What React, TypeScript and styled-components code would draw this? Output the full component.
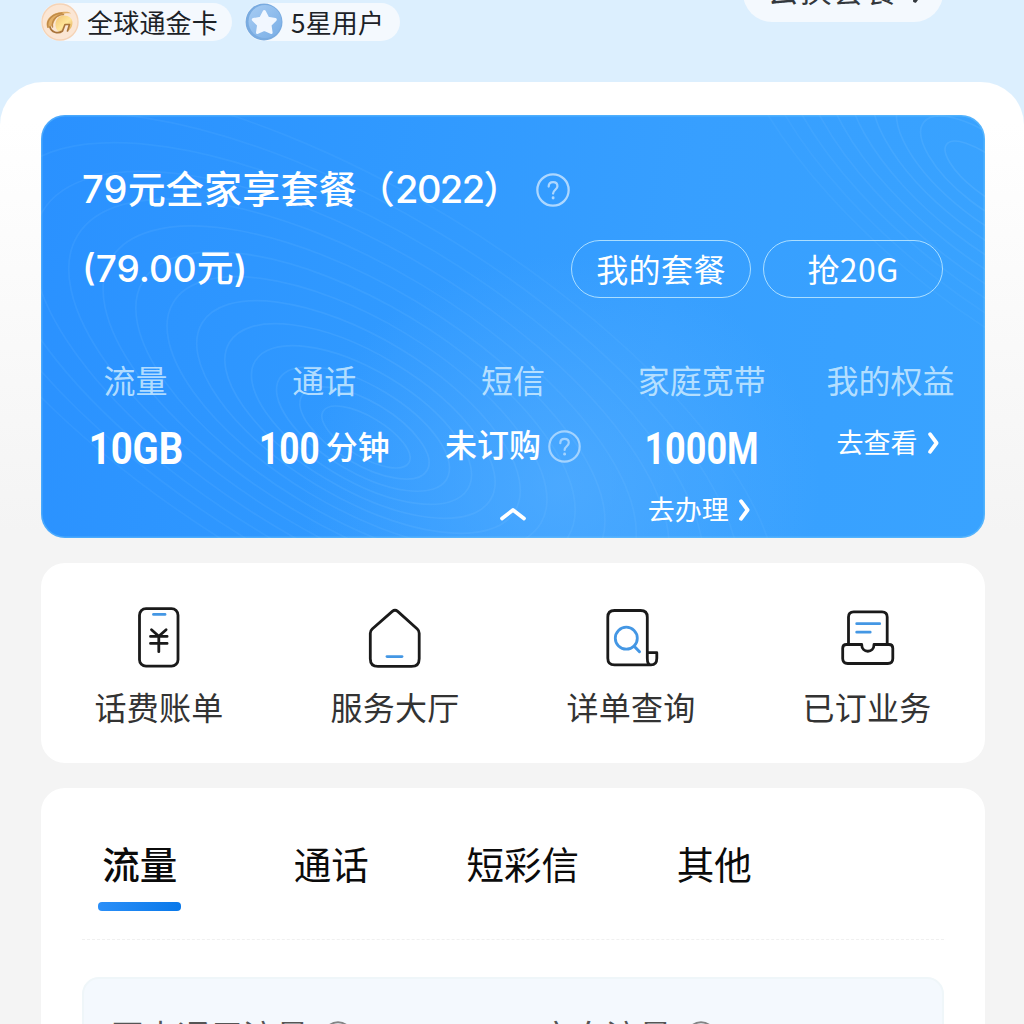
import React from "react";
import styled, { createGlobalStyle } from "styled-components";

const GlobalStyle = createGlobalStyle`
  * { box-sizing: border-box; }
  html, body { margin: 0; padding: 0; }
  body {
    width: 1024px;
    height: 1024px;
    overflow: hidden;
    font-family: "Noto Sans CJK SC", "Noto Sans", sans-serif;
    background: #dceffe;
  }
`;

const Screen = styled.div`
  width: 1024px;
  height: 1024px;
  overflow: hidden;
  background: #dceffe;
`;

const Header = styled.header`
  height: 82px;
  padding: 0 81px 0 41px;
  display: flex;
  justify-content: space-between;
  align-items: flex-start;
`;

const Badges = styled.div`
  display: flex;
  gap: 13px;
  padding-top: 3px;
`;

const Badge = styled.div<{ $width: number }>`
  width: ${(p) => p.$width}px;
  height: 38px;
  border-radius: 19px;
  background: #f4f9fe;
  display: flex;
  align-items: center;
  gap: 8px;
  color: #1c2227;
  font-size: 26px;
  line-height: 34px;
  letter-spacing: 0.2px;
  white-space: nowrap;

  svg { flex: none; }
  span { padding-bottom: 1px; }
`;

const SwitchPlan = styled.button`
  width: 200px;
  height: 58px;
  margin-top: -36px;
  border: 0;
  border-radius: 29px;
  background: #f4f9fe;
  display: flex;
  align-items: center;
  justify-content: center;
  gap: 14px;
  padding: 0 0 10px 6px;
  font: 400 31.5px/48px "Noto Sans CJK SC", sans-serif;
  letter-spacing: 1px;
  color: #33383d;

  svg { margin-top: 8px; }
`;

const Sheet = styled.main`
  height: 942px;
  padding: 33px 39px 0 41px;
  border-radius: 43px 43px 0 0;
  background: linear-gradient(#fff 0, #fff 40px, #f4f4f4 450px);
  display: flex;
  flex-direction: column;
  gap: 25px;
`;

const Hero = styled.section`
  position: relative;
  height: 423px;
  flex: none;
  padding-top: 47px;
  border-radius: 24px;
  overflow: hidden;
  color: #fff;
  background:
    radial-gradient(ellipse 260px 230px at 520px 370px, rgba(96, 180, 255, 0.5), rgba(96, 180, 255, 0)),
    linear-gradient(100deg, #2a91ff 0%, #3099ff 35%, #379fff 65%, #39a3ff 100%);
  box-shadow: inset 0 0 0 1.5px rgba(120, 205, 250, 0.4);
`;

const Contours = styled.svg`
  position: absolute;
  inset: 0;
`;

const HeroBody = styled.div`
  position: relative;
`;

const TitleRow = styled.div`
  display: flex;
  align-items: center;
  gap: 19px;
  height: 56px;
  padding-left: 41px;
`;

const Title = styled.h1`
  margin: 0;
  padding-bottom: 2px;
  width: 435px;
  font-size: 38px;
  line-height: 52px;
  font-weight: 500;
  font-family: Inter, "Noto Sans CJK SC", sans-serif;
  letter-spacing: 0.2px;
  white-space: nowrap;
`;

const Year = styled.span`
  letter-spacing: -1.6px;
`;

const PriceRow = styled.div`
  display: flex;
  align-items: center;
  justify-content: space-between;
  height: 58px;
  margin-top: 22px;
  padding: 0 42px 0 41px;
`;

const Price = styled.div`
  font-size: 37px;
  line-height: 50px;
  font-weight: 500;
  font-family: Inter, "Noto Sans CJK SC", sans-serif;
`;

const PillGroup = styled.div`
  display: flex;
  gap: 12px;
`;

const Pill = styled.button`
  width: 180px;
  height: 58px;
  padding: 0 0 2px;
  border: 1.5px solid rgba(200, 238, 255, 0.8);
  border-radius: 29px;
  background: transparent;
  color: #fff;
  font: 400 32px/50px "Noto Sans CJK SC", sans-serif;
  letter-spacing: 0.4px;
`;

const Stats = styled.div`
  display: grid;
  grid-template-columns: repeat(5, 1fr);
  margin-top: 61px;
`;

const Stat = styled.div`
  display: flex;
  flex-direction: column;
  align-items: center;
`;

const StatLabel = styled.div`
  font-size: 32px;
  line-height: 40px;
  color: rgba(214, 240, 255, 0.8);
  white-space: nowrap;
`;

const StatValue = styled.div<{ $gap?: number }>`
  display: flex;
  align-items: center;
  justify-content: center;
  gap: ${(p) => p.$gap ?? 0}px;
  height: 56px;
  margin-top: 18px;
  white-space: nowrap;

  > svg { flex: none; margin-top: 2px; }
`;

const Figure = styled.span<{ $width: number; $scale: number }>`
  width: ${(p) => p.$width}px;
  display: flex;
  justify-content: center;
  font-family: Roboto, sans-serif;
  font-size: 44.5px;
  line-height: 56px;
  font-weight: 700;
  padding-top: 7px;

  span { transform: scaleX(${(p) => p.$scale}); }
`;

const Unit = styled.span<{ $lift?: number }>`
  font-size: 32px;
  line-height: 48px;
  font-weight: 500;
  padding-bottom: ${(p) => p.$lift ?? 0}px;
`;

const Link = styled.a<{ $lift?: number }>`
  display: flex;
  align-items: center;
  gap: 9px;
  font-size: 27px;
  line-height: 40px;
  padding: 0 5px ${(p) => p.$lift ?? 0}px 0;
  color: #fff;
  white-space: nowrap;

  svg { margin-top: 2px; }
`;

const StatFoot = styled.div<{ $drop?: number }>`
  display: flex;
  align-items: center;
  height: 40px;
  margin-top: 16px;
  padding-top: ${(p) => p.$drop ?? 0}px;
`;

const Actions = styled.nav`
  height: 200px;
  flex: none;
  display: grid;
  grid-template-columns: repeat(4, 1fr);
  border-radius: 24px;
  background: #fff;
`;

const Action = styled.div`
  display: flex;
  flex-direction: column;
  align-items: center;
  padding-top: 38px;
  font-size: 32px;
  line-height: 48px;
  color: #333;
`;

const ActionLabel = styled.span`
  margin-top: 9px;
  letter-spacing: 0.3px;
`;

const Usage = styled.section`
  height: 260px;
  flex: none;
  border-radius: 24px 24px 0 0;
  background: #fff;
`;

const Tabs = styled.div`
  display: grid;
  grid-template-columns: repeat(4, 191.5px);
  padding: 48px 0 0 3px;
  height: 151px;
`;

const Tab = styled.div<{ $active?: boolean }>`
  display: flex;
  flex-direction: column;
  align-items: center;
  font-size: 37.5px;
  line-height: 54px;
  font-weight: ${(p) => (p.$active ? 500 : 400)};
  color: #0b0b0b;

  &::after {
    content: "";
    width: 83px;
    height: 9px;
    margin-top: 12px;
    border-radius: 4px;
    background: ${(p) => (p.$active ? "linear-gradient(90deg, #2b8ff8, #0878ea)" : "transparent")};
  }
`;

const Divider = styled.div`
  margin: 0 41px;
  border-top: 1px dashed #f0f0f0;
`;

const Panel = styled.div`
  margin: 37px 41px 0;
  height: 120px;
  padding: 36px 0 0 27px;
  border: 2px solid #eff6f9;
  border-radius: 17px;
  background: #f4f9fe;
  display: grid;
  grid-template-columns: 429px 1fr;
`;

const PanelItem = styled.div`
  display: flex;
  align-items: flex-start;
  gap: 14px;
  font-size: 33px;
  line-height: 40px;
  color: #555;

  svg { margin-top: 6px; }
`;

function Help({ size = 33, color = "#fff", opacity = 0.6 }: { size?: number; color?: string; opacity?: number }) {
  return (
    <svg width={size} height={size} viewBox="0 0 33 33" fill="none" stroke={color} strokeOpacity={opacity} strokeWidth="2.2" strokeLinecap="round">
      <circle cx="16.5" cy="16.5" r="15.2" />
      <path d="M12.3 13.2c0-2.6 1.8-4.3 4.3-4.3s4.2 1.6 4.2 3.9c0 3.2-4.2 3.7-4.2 7.1" />
      <path d="M16.6 24v.2" strokeWidth="2.8" />
    </svg>
  );
}

function Chevron({ color = "#fff" }: { color?: string }) {
  return (
    <svg width="13" height="24" viewBox="0 0 13 24" fill="none" stroke={color} strokeWidth="3.8" strokeLinecap="round" strokeLinejoin="round">
      <path d="M3 3.2 L9.6 12 L3 20.8" />
    </svg>
  );
}

function ChevronUp() {
  return (
    <svg width="28" height="16" viewBox="0 0 28 16" fill="none" stroke="#fff" strokeWidth="3.8" strokeLinecap="round" strokeLinejoin="round">
      <path d="M3 12.4 L14 4 L25 12.4" />
    </svg>
  );
}

function GoldCoin() {
  return (
    <svg width="38" height="38" viewBox="0 0 38 38" fill="none">
      <defs>
        <linearGradient id="gold" x1="0" y1="0" x2="1" y2="1">
          <stop offset="0" stopColor="#f2c374" />
          <stop offset="0.55" stopColor="#ffe699" />
          <stop offset="1" stopColor="#d9a04c" />
        </linearGradient>
      </defs>
      <circle cx="19" cy="19" r="18" fill="#fbe6d4" stroke="#f5d3b6" strokeWidth="1.4" />
      <path d="M6.500 25C3 17 11 9.500 21 9c5-.5 8 0 9 1.500-7-1-13 1.500-16 6.500-2 4-3.500 8-7.500 8Z" fill="#e2b068" />
      <path d="M15 25C13 18 17 12.500 23 12.500c5 0 8.500 3 8.500 7 0 4.500-2.500 7.500-5 8.500l1.500-6.500h-4.500l-2.500 5.500c-1.500 2.500-4.500 2-6-2Z" fill="url(#gold)" />
      <path d="M9 24c1 5 8 7.500 12.500 4l2.500-6.500h4.500L26.500 28" stroke="#a9743a" strokeWidth="1.7" strokeLinecap="round" strokeLinejoin="round" />
      <path d="M7 24C5 17 12 10.500 21 10M11.500 24c-1-6 3-12 11-12.500" stroke="#c08a48" strokeWidth="1.5" strokeLinecap="round" />
    </svg>
  );
}

function StarCoin() {
  return (
    <svg width="38" height="38" viewBox="0 0 38 38">
      <defs>
        <linearGradient id="blue" x1="0" y1="0" x2="1" y2="1">
          <stop offset="0" stopColor="#a8cdf3" />
          <stop offset="1" stopColor="#78ade6" />
        </linearGradient>
      </defs>
      <circle cx="19" cy="19" r="18.5" fill="#79abe0" />
      <circle cx="20" cy="18.5" r="16.5" fill="url(#blue)" />
      <path d="M19.300 8.500l3.500 6.800 7.500 1.300-5.300 5.400 1.100 7.500-6.800-3.200-6.800 3.200 1.100-7.500-5.300-5.400 7.500-1.300Z" fill="#f1f7ff" stroke="#f1f7ff" strokeWidth="3" strokeLinejoin="round" />
    </svg>
  );
}

const ink = { fill: "none", stroke: "#1a1a1a", strokeWidth: 2.8, strokeLinecap: "round", strokeLinejoin: "round" } as const;
const accent = "#4497e4";

function BillIcon() {
  return (
    <svg width="72" height="72" viewBox="0 0 72 72" {...ink}>
      <rect x="16.5" y="7.700" width="38.5" height="57.5" rx="6.5" />
      <path d="M30.500 13.400h11.500" stroke={accent} />
      <path d="M28.500 28.700l7.300 6.600 7.300-6.600M27.500 35.400h16.600M27.500 42.400h16.600M35.800 35.400v15.300" />
    </svg>
  );
}

function HallIcon() {
  return (
    <svg width="72" height="72" viewBox="0 0 72 72" {...ink}>
      <path d="M33.300 10.400Q36 8.200 38.700 10.400L58.300 28Q60.200 29.700 60.200 32.200V57.700Q60.200 65.400 52.500 65.400H19Q11.300 65.400 11.300 57.700V32.200Q11.300 29.700 13.200 28Z" />
      <path d="M28 55.600h15" stroke={accent} />
    </svg>
  );
}

function DetailIcon() {
  return (
    <svg width="72" height="72" viewBox="0 0 72 72" {...ink}>
      <path d="M52.300 51.700V16.200Q52.300 9.500 45.600 9.500H19.500Q12.800 9.500 12.800 16.200V57.200Q12.800 63.900 19.500 63.900H56Q61.800 63.900 61.800 57.200V51.700H52.300V57.200Q52.300 63.900 56 63.900" />
      <circle cx="31.300" cy="37.200" r="11" stroke={accent} />
      <path d="M39.200 45.200l5.300 5.500" stroke={accent} strokeWidth="3" />
    </svg>
  );
}

function OrdersIcon() {
  return (
    <svg width="72" height="72" viewBox="0 0 72 72" {...ink}>
      <path d="M17.500 43.500V16Q17.500 10.800 22.700 10.800H51Q56.200 10.800 56.200 16V43.500" />
      <path d="M15.500 43.500H30.700C30.700 52.500 43 52.500 43 43.500H58Q61.800 43.500 61.800 47.300V57.500Q61.800 62.500 56.800 62.500H16.700Q11.700 62.500 11.700 57.500V47.300Q11.700 43.500 15.500 43.500Z" />
      <path d="M25.700 22.700h23M25.700 31.200h13.500" stroke={accent} />
    </svg>
  );
}

const valley = Array.from({ length: 14 }, (_, i) => ({
  cx: 325 - i * 1.5,
  cy: 322 - i * 4,
  rx: 50 + i * 22 + i * i * 0.9,
  ry: 20 + i * 11 + i * i * 0.2,
}));

const summit = Array.from({ length: 10 }, (_, i) => ({
  cx: 945 + i * 4,
  cy: 60 - i * 1,
  rx: 50 + i * 34,
  ry: 18 + i * 15,
}));

function ContourMap() {
  return (
    <Contours width="944" height="423" viewBox="0 0 944 423" fill="none" stroke="#8fd0ff" strokeWidth="1.7" aria-hidden>
      {valley.map((e, i) => (
        <ellipse key={i} {...e} transform={`rotate(31 ${e.cx} ${e.cy})`} strokeOpacity={0.15 - i * 0.005} />
      ))}
      {summit.map((e, i) => (
        <ellipse key={i} {...e} transform={`rotate(38 ${e.cx} ${e.cy})`} strokeOpacity={0.16 - i * 0.01} />
      ))}
    </Contours>
  );
}

const actions = [
  { label: "话费账单", icon: <BillIcon /> },
  { label: "服务大厅", icon: <HallIcon /> },
  { label: "详单查询", icon: <DetailIcon /> },
  { label: "已订业务", icon: <OrdersIcon /> },
];

const tabs = ["流量", "通话", "短彩信", "其他"];

export default function App() {
  return (
    <Screen>
      <GlobalStyle />
      <Header>
        <Badges>
          <Badge $width={191}>
            <GoldCoin />
            <span>全球通金卡</span>
          </Badge>
          <Badge $width={155}>
            <StarCoin />
            <span>5星用户</span>
          </Badge>
        </Badges>
        <SwitchPlan>
          去换套餐
          <Chevron color="#33383d" />
        </SwitchPlan>
      </Header>

      <Sheet>
        <Hero>
          <ContourMap />
          <HeroBody>
            <TitleRow>
              <Title>79元全家享套餐（<Year>2022</Year>）</Title>
              <Help size={34} />
            </TitleRow>
            <PriceRow>
              <Price>(79.00元)</Price>
              <PillGroup>
                <Pill>我的套餐</Pill>
                <Pill>抢20G</Pill>
              </PillGroup>
            </PriceRow>
            <Stats>
              <Stat>
                <StatLabel>流量</StatLabel>
                <StatValue>
                  <Figure $width={94} $scale={0.86}><span>10GB</span></Figure>
                </StatValue>
              </Stat>
              <Stat>
                <StatLabel>通话</StatLabel>
                <StatValue $gap={5}>
                  <Figure $width={62} $scale={0.79}><span>100</span></Figure>
                  <Unit>分钟</Unit>
                </StatValue>
              </Stat>
              <Stat>
                <StatLabel>短信</StatLabel>
                <StatValue $gap={7}>
                  <Unit $lift={4}>未订购</Unit>
                  <Help opacity={0.5} />
                </StatValue>
                <StatFoot $drop={10}><ChevronUp /></StatFoot>
              </Stat>
              <Stat>
                <StatLabel>家庭宽带</StatLabel>
                <StatValue>
                  <Figure $width={115} $scale={0.81}><span>1000M</span></Figure>
                </StatValue>
                <StatFoot>
                  <Link>去办理<Chevron /></Link>
                </StatFoot>
              </Stat>
              <Stat>
                <StatLabel>我的权益</StatLabel>
                <StatValue>
                  <Link $lift={6}>去查看<Chevron /></Link>
                </StatValue>
              </Stat>
            </Stats>
          </HeroBody>
        </Hero>

        <Actions>
          {actions.map((a) => (
            <Action key={a.label}>
              {a.icon}
              <ActionLabel>{a.label}</ActionLabel>
            </Action>
          ))}
        </Actions>

        <Usage>
          <Tabs>
            {tabs.map((t, i) => (
              <Tab key={t} $active={i === 0}>{t}</Tab>
            ))}
          </Tabs>
          <Divider />
          <Panel>
            <PanelItem>国内通用流量<Help size={30} color="#666" opacity={0.8} /></PanelItem>
            <PanelItem>定向流量<Help size={30} color="#666" opacity={0.8} /></PanelItem>
          </Panel>
        </Usage>
      </Sheet>
    </Screen>
  );
}
